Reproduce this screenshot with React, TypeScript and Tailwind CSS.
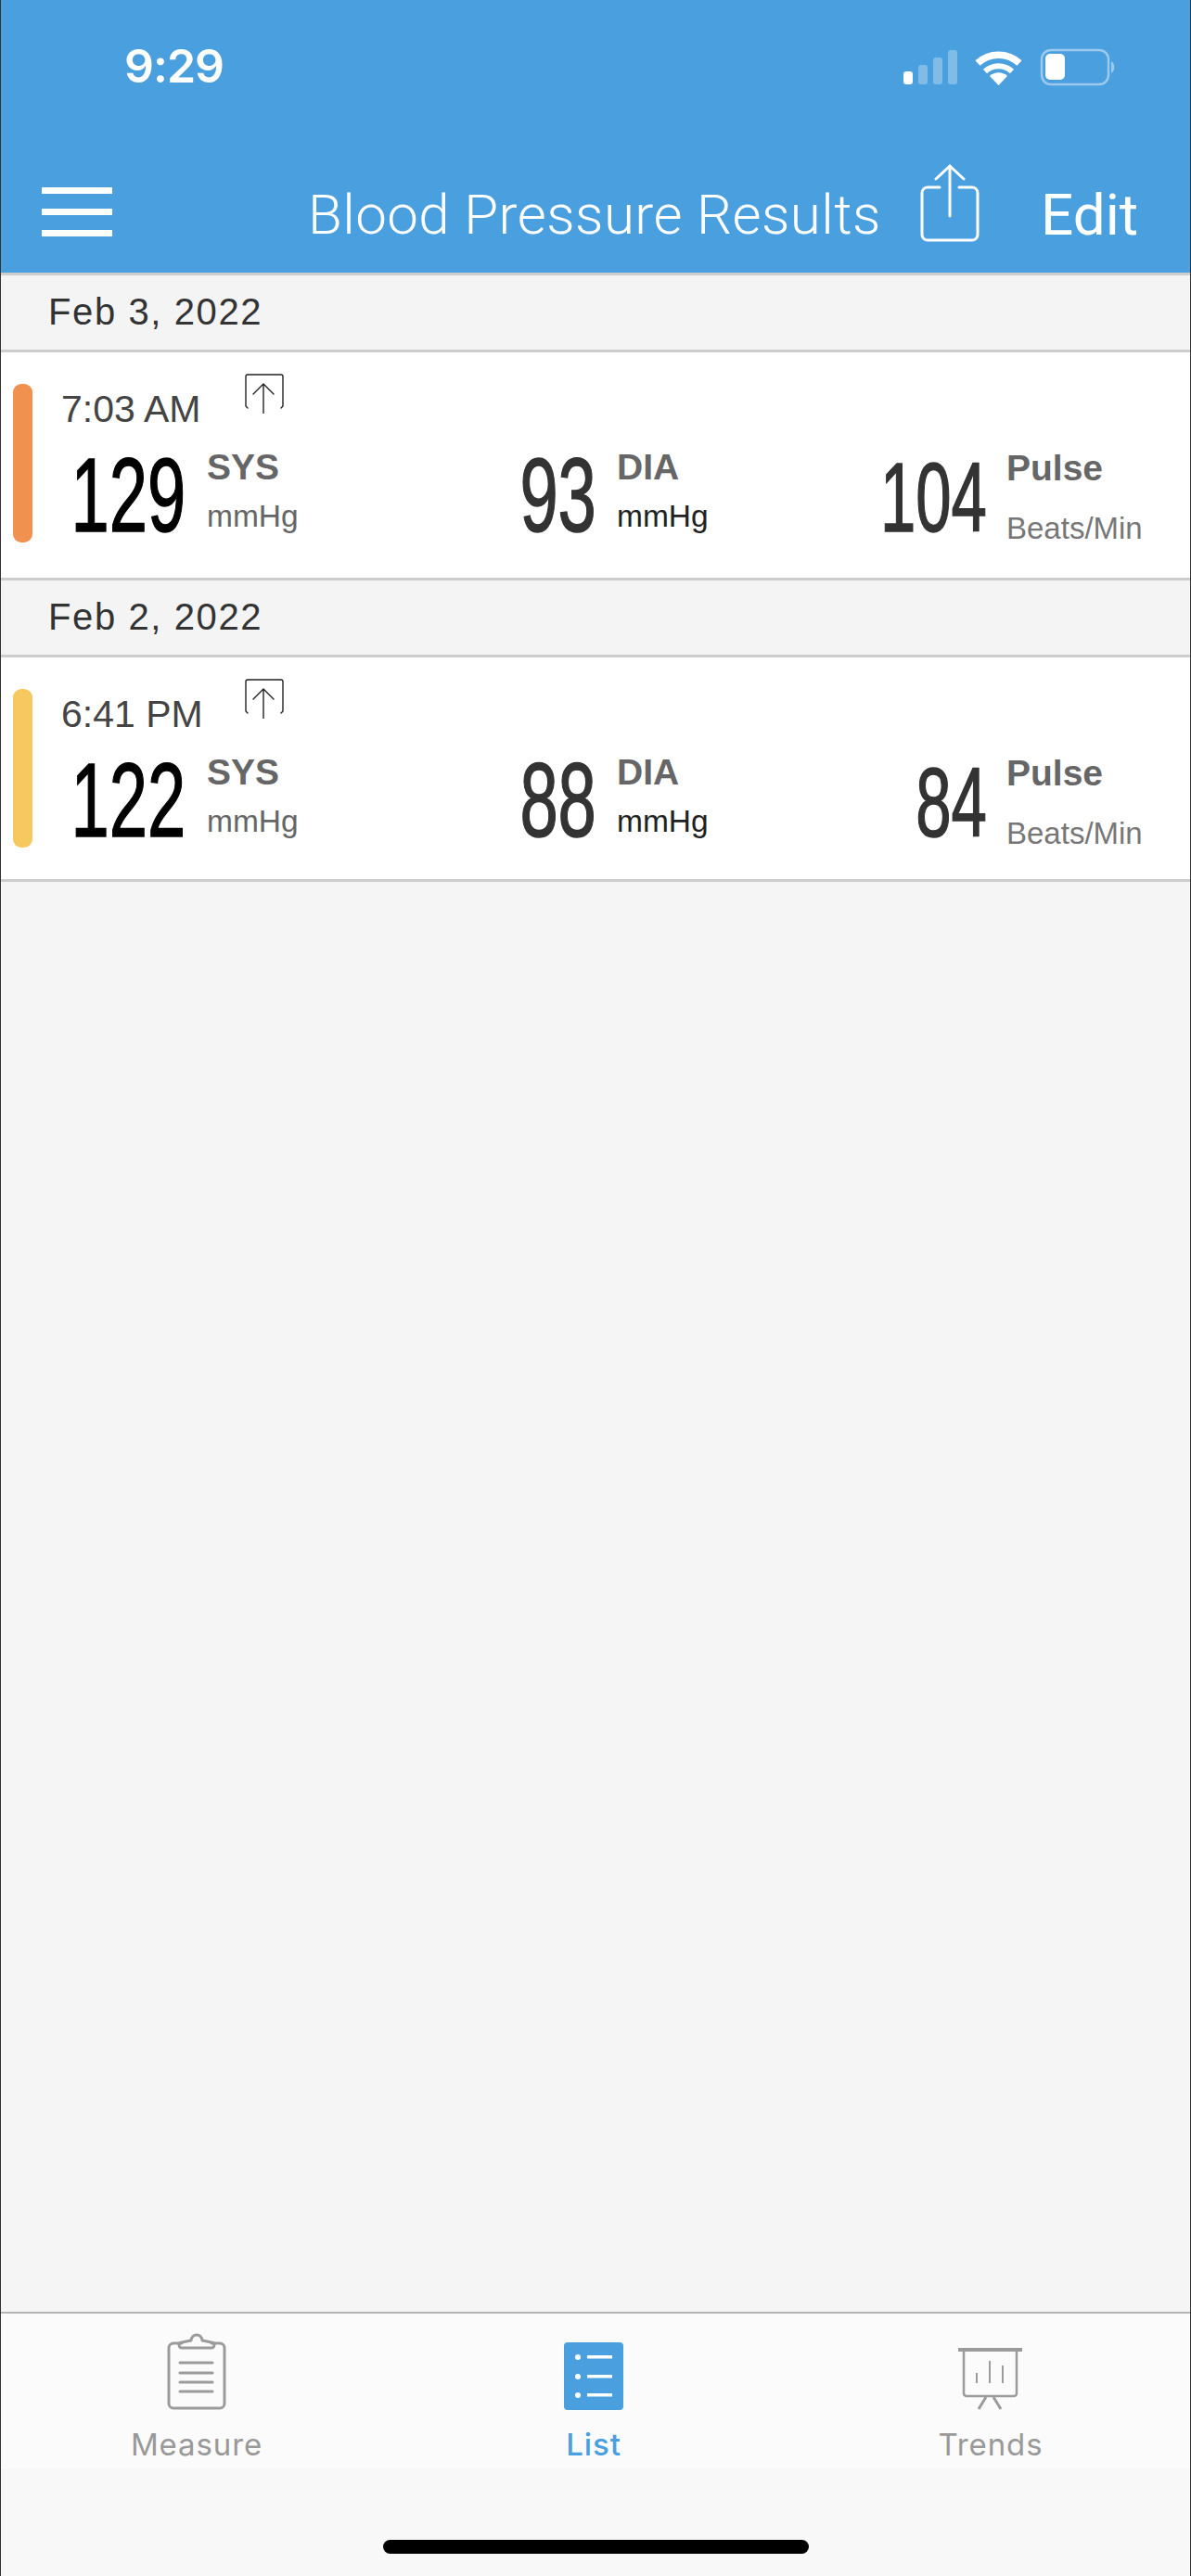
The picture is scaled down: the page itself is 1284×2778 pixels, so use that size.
const sans = "font-['Liberation_Sans',Arial,sans-serif]";

function StatusBar() {
  return (
    <div className="h-[150px] relative">
      <span className="absolute left-[133px] top-[41px] font-['Inter',sans-serif] font-semibold text-[50px] leading-[60px] text-white tracking-[-1px]">9:29</span>
      <svg className="absolute left-[970px] top-[50px]" width="236" height="46" viewBox="970 50 236 46" fill="none">
        <rect x="973" y="77" width="10" height="14" rx="3" fill="#fff" />
        <rect x="989" y="70" width="10" height="21" rx="3" fill="#fff" fillOpacity="0.3" />
        <rect x="1005" y="62" width="10" height="29" rx="3" fill="#fff" fillOpacity="0.3" />
        <rect x="1021" y="54" width="10" height="37" rx="3" fill="#fff" fillOpacity="0.3" />
        <path d="M1053 68a33 33 0 0 1 45 0" stroke="#fff" strokeWidth="7.5" />
        <path d="M1061 77a21 21 0 0 1 29 0" stroke="#fff" strokeWidth="6" />
        <path d="M1075.5 92L1066 82a14 14 0 0 1 19 0Z" fill="#fff" />
        <rect x="1122" y="54" width="72" height="37" rx="10" stroke="#fff" strokeOpacity="0.45" strokeWidth="2.5" />
        <rect x="1126" y="58" width="21" height="28" rx="5" fill="#fff" />
        <path d="M1197 66a8 8 0 0 1 0 13Z" fill="#fff" fillOpacity="0.45" />
      </svg>
    </div>
  );
}

function NavBar() {
  return (
    <div className="h-[144px] flex items-start relative">
      <div className="ml-[44px] mt-[52px] w-[76px] flex flex-col gap-[16px]">
        <div className="h-[7px] bg-white" />
        <div className="h-[7px] bg-white" />
        <div className="h-[7px] bg-white" />
      </div>
      <span className="ml-[211px] mt-[47px] font-['Roboto',sans-serif] font-light text-[60px] leading-[70px] text-white whitespace-nowrap tracking-[0.45px]">Blood Pressure Results</span>
      <svg className="absolute left-[989px] top-[25px]" width="68" height="88" viewBox="990 175 68 88" fill="none" stroke="#fff" strokeWidth="3" strokeLinecap="round" strokeLinejoin="round">
        <path d="M1013 202h-13a6 6 0 0 0-6 6v45a6 6 0 0 0 6 6h48a6 6 0 0 0 6-6v-45a6 6 0 0 0-6-6h-14" />
        <path d="M1024 179v54M1009 193l15-14 15 14" />
      </svg>
      <span className="absolute left-[1121px] top-[47px] font-['Roboto',sans-serif] text-[62px] leading-[70px] text-white">Edit</span>
    </div>
  );
}

function UploadMark() {
  return (
    <svg className="absolute left-[261px] top-[22px]" width="44" height="44" viewBox="0 0 44 44" fill="none" stroke="#222" strokeWidth="1.4" strokeLinecap="round">
      <path d="M3 36V4a2 2 0 0 1 2-2h36a2 2 0 0 1 2 2v32M3 36l2 2M43 36l-2 2" />
      <path d="M22 12v32M11 23L22 12l11 11" />
    </svg>
  );
}

function Value({ value, width, tone, size }: { value: string; width: string; tone: string; size: string }) {
  return (
    <div className={`${width} shrink-0 flex justify-end`}>
      <span className={`${sans} ${tone} ${size} origin-right scale-x-[0.65] whitespace-nowrap [-webkit-text-stroke:1.5px_currentColor]`}>{value}</span>
    </div>
  );
}

function Reading({ time, stripe, sys, dia, pulse, height }: { time: string; stripe: string; sys: string; dia: string; pulse: string; height: string }) {
  return (
    <div className={`${height} bg-white relative flex`}>
      <div className={`ml-[13px] mt-[34px] w-[21px] h-[171px] rounded-[9px] ${stripe}`} />
      <div className="ml-[31px] flex-1">
        <div className={`${sans} mt-[38px] text-[41px] leading-[46px] text-[#444]`}>{time}</div>
        <div className="flex mt-[11px] h-[130px]">
          <Value value={sys} width="w-[134px]" tone="text-black" size="text-[114px] leading-[118px]" />
          <div className="ml-[23px] w-[328px] flex flex-col">
            <span className={`${sans} font-bold text-[#666] text-[39px] leading-[44px] mt-[7px]`}>SYS</span>
            <span className={`${sans} text-[#666] text-[33.5px] leading-[40px] mt-[11px]`}>mmHg</span>
          </div>
          <Value value={dia} width="w-[92px]" tone="text-[#333]" size="text-[114px] leading-[118px]" />
          <div className="ml-[22px] w-[281px] flex flex-col">
            <span className={`${sans} font-bold text-[#666] text-[39px] leading-[44px] mt-[7px]`}>DIA</span>
            <span className={`${sans} text-[#222] text-[33.5px] leading-[40px] mt-[11px]`}>mmHg</span>
          </div>
          <Value value={pulse} width="w-[118px]" tone="text-[#333]" size="text-[106px] leading-[122px]" />
          <div className="ml-[21px] flex flex-col">
            <span className={`${sans} font-bold text-[#666] text-[39px] leading-[44px] mt-[8px]`}>Pulse</span>
            <span className={`${sans} text-[#777] text-[33px] leading-[40px] mt-[23px] whitespace-nowrap`}>Beats/Min</span>
          </div>
        </div>
        <UploadMark />
      </div>
    </div>
  );
}

function DateRow({ label }: { label: string }) {
  return (
    <div className="h-[86px] bg-[#f4f4f4] border-y-[3px] border-[#cdcdcd] flex items-center">
      <span className={`${sans} ml-[51px] text-[40px] tracking-[1.6px] text-[#333] -mt-[2px]`}>{label}</span>
    </div>
  );
}

function MeasureIcon() {
  return (
    <svg width="68" height="84" viewBox="179 2516 68 84" fill="none" stroke="#9b9b9b" strokeWidth="3" strokeLinecap="round" strokeLinejoin="round">
      <path d="M197 2527h-9a5 5 0 0 0-5 5v60a5 5 0 0 0 5 5h50a5 5 0 0 0 5-5v-60a5 5 0 0 0-5-5h-9" />
      <path d="M197 2526l10-2a6 6 0 0 1 12 0l10 2a3 3 0 0 1 0 6h-32a3 3 0 0 1 0-6Z" />
      <path d="M195 2548h35M195 2559h35M195 2569h35M195 2579h35" />
    </svg>
  );
}

function ListIcon() {
  return (
    <svg width="64" height="74" viewBox="610 2524 64 74">
      <rect x="610" y="2524" width="64" height="73" rx="4" fill="#4a9fde" />
      <g fill="#fff">
        <circle cx="625" cy="2540" r="3" />
        <circle cx="625" cy="2561" r="3" />
        <circle cx="625" cy="2581" r="3" />
        <rect x="635" y="2538" width="27" height="3.5" />
        <rect x="635" y="2559" width="27" height="3.5" />
        <rect x="635" y="2579" width="27" height="3.5" />
      </g>
    </svg>
  );
}

function TrendsIcon() {
  return (
    <svg width="72" height="70" viewBox="1035 2526 72 70" fill="none" stroke="#9b9b9b" strokeWidth="2.5">
      <path d="M1036 2530h69" strokeWidth="4" />
      <path d="M1042 2532v45a3 3 0 0 0 3 3h51a3 3 0 0 0 3-3v-45" />
      <path d="M1066 2581l-8 13M1074 2581l8 13" strokeWidth="3" />
      <path d="M1056 2555v11M1070 2542v24M1084 2547v19" strokeWidth="2" />
    </svg>
  );
}

function Tab({ icon, label, tone }: { icon: React.ReactNode; label: string; tone: string }) {
  return (
    <div className="w-[428px] shrink-0 flex flex-col items-center">
      <div className="h-[84px] flex items-end">{icon}</div>
      <span className={`font-['Inter',sans-serif] text-[33px] leading-[40px] mt-[16px] tracking-[0.9px] ${tone}`}>{label}</span>
    </div>
  );
}

export default function App() {
  const rows = [
    { date: "Feb 3, 2022", time: "7:03 AM", stripe: "bg-[#f0914f]", sys: "129", dia: "93", pulse: "104", height: "h-[243px]" },
    { date: "Feb 2, 2022", time: "6:41 PM", stripe: "bg-[#f5c860]", sys: "122", dia: "88", pulse: "84", height: "h-[239px]" },
  ];
  return (
    <div className="w-[1284px] h-[2778px] bg-[#f5f5f5] flex flex-col border-x border-[#333] overflow-hidden">
      <div className="bg-[#4a9fde] h-[294px] shrink-0">
        <StatusBar />
        <NavBar />
      </div>
      {rows.map((r) => (
        <div key={r.date}>
          <DateRow label={r.date} />
          <Reading time={r.time} stripe={r.stripe} sys={r.sys} dia={r.dia} pulse={r.pulse} height={r.height} />
        </div>
      ))}
      <div className="h-[3px] bg-[#cdcdcd] shrink-0" />
      <div className="flex-1" />
      <div className="h-[285px] shrink-0 bg-[#f8f8f8] border-t-2 border-[#b5b5b5] flex flex-col">
        <div className="h-[167px] bg-[#fbfbfb] flex pt-[21px] -ml-[3px]">
          <Tab icon={<MeasureIcon />} label="Measure" tone="text-[#999]" />
          <Tab icon={<ListIcon />} label="List" tone="text-[#4a9fde] font-medium" />
          <Tab icon={<TrendsIcon />} label="Trends" tone="text-[#999]" />
        </div>
        <div className="mt-[77px] mx-auto w-[459px] h-[15px] rounded-full bg-black" />
      </div>
    </div>
  );
}
